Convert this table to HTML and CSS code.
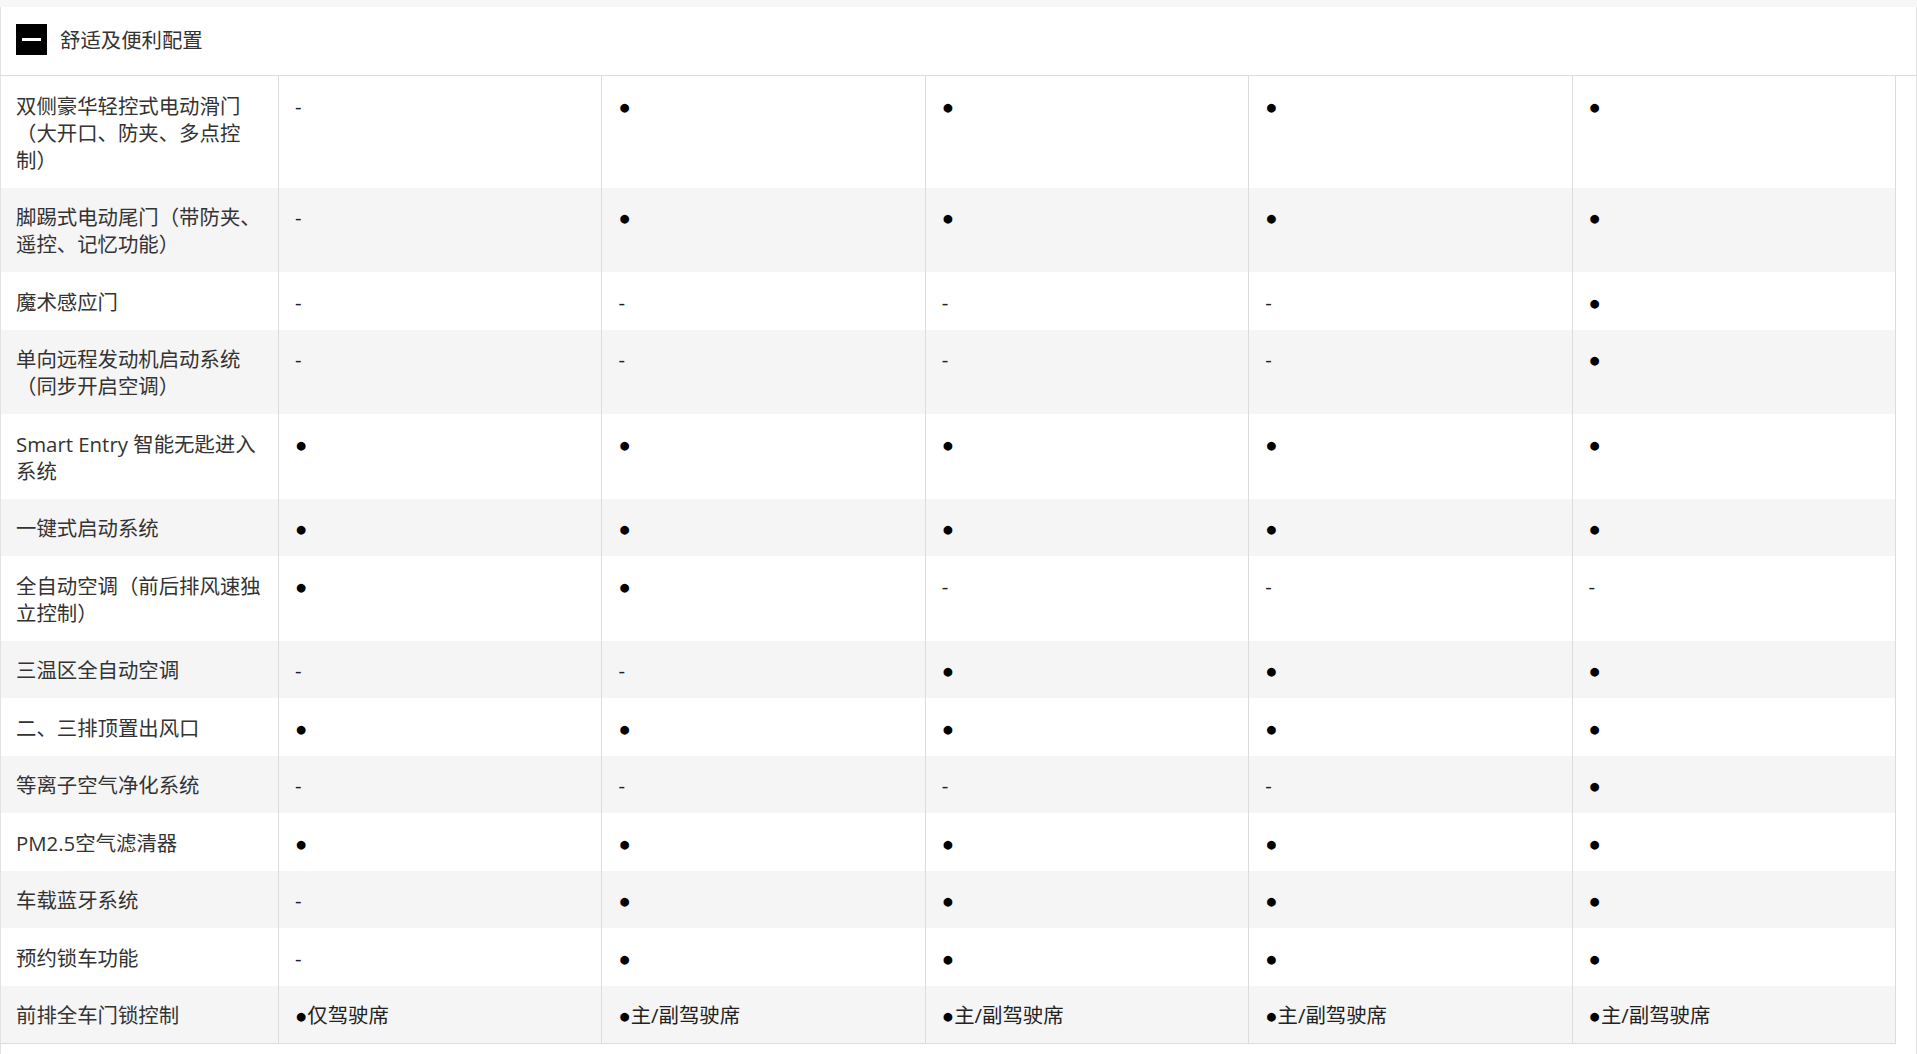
FILE: index.html
```html
<!DOCTYPE html>
<html lang="zh-CN">
<head>
<meta charset="utf-8">
<title>舒适及便利配置</title>
<link rel="stylesheet" href="styles.css">
</head>
<body>
<div class="panel">
  <div class="section-head">
    <span class="toggle"></span>
    <span class="section-title">舒适及便利配置</span>
  </div>
  <div class="table">
    <div class="row">
      <div class="cell label">双侧豪华轻控式电动滑门（大开口、防夹、多点控制）</div>
      <div class="cell">-</div>
      <div class="cell"><span class="dot">●</span></div>
      <div class="cell"><span class="dot">●</span></div>
      <div class="cell"><span class="dot">●</span></div>
      <div class="cell"><span class="dot">●</span></div>
    </div>
    <div class="row">
      <div class="cell label">脚踢式电动尾门（带防夹、遥控、记忆功能）</div>
      <div class="cell">-</div>
      <div class="cell"><span class="dot">●</span></div>
      <div class="cell"><span class="dot">●</span></div>
      <div class="cell"><span class="dot">●</span></div>
      <div class="cell"><span class="dot">●</span></div>
    </div>
    <div class="row">
      <div class="cell label">魔术感应门</div>
      <div class="cell">-</div>
      <div class="cell">-</div>
      <div class="cell">-</div>
      <div class="cell">-</div>
      <div class="cell"><span class="dot">●</span></div>
    </div>
    <div class="row">
      <div class="cell label">单向远程发动机启动系统（同步开启空调）</div>
      <div class="cell">-</div>
      <div class="cell">-</div>
      <div class="cell">-</div>
      <div class="cell">-</div>
      <div class="cell"><span class="dot">●</span></div>
    </div>
    <div class="row">
      <div class="cell label">Smart Entry 智能无匙进入系统</div>
      <div class="cell"><span class="dot">●</span></div>
      <div class="cell"><span class="dot">●</span></div>
      <div class="cell"><span class="dot">●</span></div>
      <div class="cell"><span class="dot">●</span></div>
      <div class="cell"><span class="dot">●</span></div>
    </div>
    <div class="row">
      <div class="cell label">一键式启动系统</div>
      <div class="cell"><span class="dot">●</span></div>
      <div class="cell"><span class="dot">●</span></div>
      <div class="cell"><span class="dot">●</span></div>
      <div class="cell"><span class="dot">●</span></div>
      <div class="cell"><span class="dot">●</span></div>
    </div>
    <div class="row">
      <div class="cell label">全自动空调（前后排风速独立控制）</div>
      <div class="cell"><span class="dot">●</span></div>
      <div class="cell"><span class="dot">●</span></div>
      <div class="cell">-</div>
      <div class="cell">-</div>
      <div class="cell">-</div>
    </div>
    <div class="row">
      <div class="cell label">三温区全自动空调</div>
      <div class="cell">-</div>
      <div class="cell">-</div>
      <div class="cell"><span class="dot">●</span></div>
      <div class="cell"><span class="dot">●</span></div>
      <div class="cell"><span class="dot">●</span></div>
    </div>
    <div class="row">
      <div class="cell label">二、三排顶置出风口</div>
      <div class="cell"><span class="dot">●</span></div>
      <div class="cell"><span class="dot">●</span></div>
      <div class="cell"><span class="dot">●</span></div>
      <div class="cell"><span class="dot">●</span></div>
      <div class="cell"><span class="dot">●</span></div>
    </div>
    <div class="row">
      <div class="cell label">等离子空气净化系统</div>
      <div class="cell">-</div>
      <div class="cell">-</div>
      <div class="cell">-</div>
      <div class="cell">-</div>
      <div class="cell"><span class="dot">●</span></div>
    </div>
    <div class="row">
      <div class="cell label">PM2.5空气滤清器</div>
      <div class="cell"><span class="dot">●</span></div>
      <div class="cell"><span class="dot">●</span></div>
      <div class="cell"><span class="dot">●</span></div>
      <div class="cell"><span class="dot">●</span></div>
      <div class="cell"><span class="dot">●</span></div>
    </div>
    <div class="row">
      <div class="cell label">车载蓝牙系统</div>
      <div class="cell">-</div>
      <div class="cell"><span class="dot">●</span></div>
      <div class="cell"><span class="dot">●</span></div>
      <div class="cell"><span class="dot">●</span></div>
      <div class="cell"><span class="dot">●</span></div>
    </div>
    <div class="row">
      <div class="cell label">预约锁车功能</div>
      <div class="cell">-</div>
      <div class="cell"><span class="dot">●</span></div>
      <div class="cell"><span class="dot">●</span></div>
      <div class="cell"><span class="dot">●</span></div>
      <div class="cell"><span class="dot">●</span></div>
    </div>
    <div class="row">
      <div class="cell label">前排全车门锁控制</div>
      <div class="cell"><span class="dot">●</span>仅驾驶席</div>
      <div class="cell"><span class="dot">●</span>主/副驾驶席</div>
      <div class="cell"><span class="dot">●</span>主/副驾驶席</div>
      <div class="cell"><span class="dot">●</span>主/副驾驶席</div>
      <div class="cell"><span class="dot">●</span>主/副驾驶席</div>
    </div>
  </div>
  <div class="after"></div>
</div>
</body>
</html>
```

FILE: styles.css
```css
html, body {
  margin: 0;
  padding: 0;
}

body {
  background: #f7f7f7;
  font-family: "Open Sans", "Noto Sans CJK SC", sans-serif;
  font-size: 20.4px;
  color: #333;
}

.panel {
  margin-top: 7px;
  background: #fff;
  border-left: 1px solid #e2e2e2;
  border-right: 1px solid #e2e2e2;
}

.section-head {
  display: flex;
  align-items: center;
  gap: 13px;
  padding: 17px 15px 20px 15px;
  border-bottom: 1px solid #dcdcdc;
}

.toggle {
  width: 31px;
  height: 31px;
  background: #000;
  display: flex;
  align-items: center;
  justify-content: center;
  flex: none;
}

.toggle::before {
  content: "";
  width: 19px;
  height: 3px;
  background: #fff;
}

.section-title {
  line-height: 33px;
  margin-bottom: -2px;
  color: #333;
}

.table {
  width: 1895px;
  border-bottom: 1px solid #dcdcdc;
  box-sizing: border-box;
}

.row {
  display: grid;
  grid-template-columns: 278px repeat(5, 1fr);
}

.row:nth-child(even) {
  background: #f5f5f5;
}

.cell {
  border-right: 1px solid #dcdcdc;
  padding: 16.5px 14px 14px 16px;
  line-height: 27px;
  color: #222;
}

.cell.label {
  padding-left: 15px;
  color: #333;
}

.dot {
  font-family: "Liberation Sans", "DejaVu Sans", sans-serif;
  line-height: 1;
  color: #000;
}

.after {
  height: 40px;
}
```
